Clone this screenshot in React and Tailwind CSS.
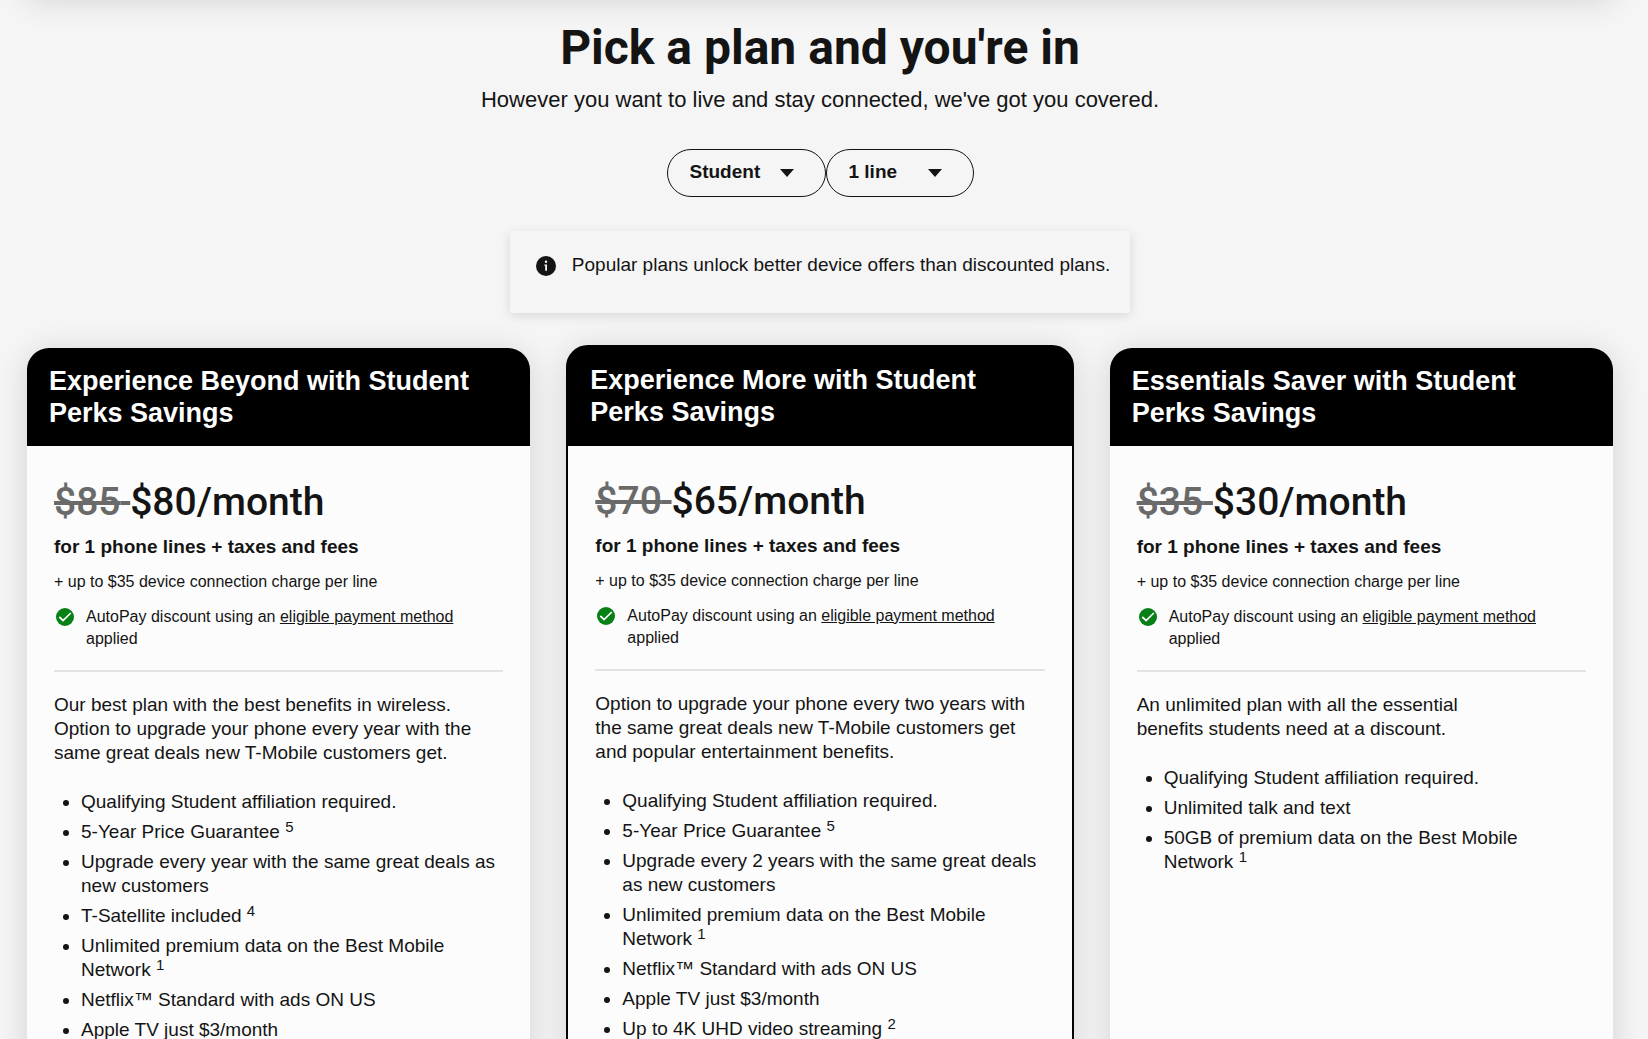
import { useState } from "react";
import clsx from "clsx";

const PLANS = [
  {
    name: "Experience Beyond with Student Perks Savings",
    oldPrice: "$85",
    price: "$80",
    description: [
      "Our best plan with the best benefits in wireless.",
      "Option to upgrade your phone every year with the",
      "same great deals new T-Mobile customers get.",
    ],
    features: [
      { text: "Qualifying Student affiliation required." },
      { text: "5-Year Price Guarantee", note: 5 },
      { text: "Upgrade every year with the same great deals as new customers" },
      { text: "T-Satellite included", note: 4 },
      { text: "Unlimited premium data on the Best Mobile Network", note: 1 },
      { text: "Netflix™ Standard with ads ON US" },
      { text: "Apple TV just $3/month" },
    ],
  },
  {
    name: "Experience More with Student Perks Savings",
    oldPrice: "$70",
    price: "$65",
    highlighted: true,
    description: [
      "Option to upgrade your phone every two years with",
      "the same great deals new T-Mobile customers get",
      "and popular entertainment benefits.",
    ],
    features: [
      { text: "Qualifying Student affiliation required." },
      { text: "5-Year Price Guarantee", note: 5 },
      { text: "Upgrade every 2 years with the same great deals as new customers" },
      { text: "Unlimited premium data on the Best Mobile Network", note: 1 },
      { text: "Netflix™ Standard with ads ON US" },
      { text: "Apple TV just $3/month" },
      { text: "Up to 4K UHD video streaming", note: 2 },
    ],
  },
  {
    name: "Essentials Saver with Student Perks Savings",
    oldPrice: "$35",
    price: "$30",
    description: [
      "An unlimited plan with all the essential",
      "benefits students need at a discount.",
    ],
    features: [
      { text: "Qualifying Student affiliation required." },
      { text: "Unlimited talk and text" },
      { text: "50GB of premium data on the Best Mobile Network", note: 1 },
    ],
  },
];

function PillSelect({ label, value, onChange, options, className }) {
  return (
    <label className="relative flex items-center">
      <select
        aria-label={label}
        value={value}
        onChange={(e) => onChange(e.target.value)}
        className={clsx(
          "h-12 appearance-none rounded-full border border-[#141414] bg-transparent pb-[2px] pl-[22px] text-[19px] font-bold",
          className
        )}
      >
        {options.map((option) => (
          <option key={option}>{option}</option>
        ))}
      </select>
      <svg
        className="pointer-events-none absolute right-8 h-2 w-[14px]"
        viewBox="0 0 14 8"
        fill="currentColor"
      >
        <path d="M0 0h14L7 8z" />
      </svg>
    </label>
  );
}

function InfoIcon() {
  return (
    <svg className="mt-[3px] size-5 shrink-0" viewBox="0 0 20 20">
      <circle cx="10" cy="10" r="10" fill="#141414" />
      <circle cx="10" cy="5.8" r="1.2" fill="#f5f5f5" />
      <path d="M8.4 8.4h2.6v6.4H9.2V9.7h-.8z" fill="#f5f5f5" />
    </svg>
  );
}

function CheckIcon() {
  return (
    <svg className="mx-[2px] mt-[2px] size-[18px] shrink-0" viewBox="0 0 18 18">
      <circle cx="9" cy="9" r="9" fill="#078015" />
      <path d="M3.3 9l3.8 3.5L14.8 5" fill="none" stroke="#fff" strokeWidth="1.7" />
    </svg>
  );
}

function PlanCard({ plan }) {
  return (
    <article
      className={clsx(
        "flex flex-col overflow-hidden rounded-t-[22px] bg-black shadow-[0_4px_32px_rgba(0,0,0,0.14)]",
        plan.highlighted && "-mx-[2px] -mt-[3px] border-2 border-black"
      )}
    >
      <h2
        className={clsx(
          "px-[22px] pt-[17px] text-[27px] leading-8 font-bold text-white",
          plan.highlighted ? "pb-[18px]" : "pb-[17px]"
        )}
      >
        {plan.name}
      </h2>
      <div
        className={clsx(
          "grow bg-[#fcfcfc] px-[27px] pb-10",
          plan.highlighted ? "pt-[31px]" : "pt-8"
        )}
      >
        <p className="font-[Roboto,sans-serif] text-[39px] leading-12 font-medium">
          <s className="text-[#6a6a6a] decoration-4">{plan.oldPrice}&nbsp;</s>
          {plan.price}/month
        </p>
        <p className="mt-[5px] text-[19px] leading-8 font-bold">
          for 1 phone lines + taxes and fees
        </p>
        <p className="mt-[7px] text-base leading-6">
          + up to $35 device connection charge per line
        </p>
        <div className="mt-3 flex gap-[10px] text-base leading-[22px]">
          <CheckIcon />
          <p>
            AutoPay discount using an{" "}
            <a href="#payment" className="underline">
              eligible payment method
            </a>{" "}
            applied
          </p>
        </div>
        <hr className="mt-5 border-t-2 border-[#e3e3e3]" />
        <p className="mt-[21px] text-[19px] leading-6">
          {plan.description.map((line) => (
            <span key={line} className="block">
              {line}
            </span>
          ))}
        </p>
        <ul className="mt-[25px] flex list-disc flex-col gap-[6px] pl-[27px] text-[19px] leading-6">
          {plan.features.map((feature) => (
            <li key={feature.text}>
              {feature.text}{" "}
              {feature.note && <sup className="-top-[6px] text-[15px]">{feature.note}</sup>}
            </li>
          ))}
        </ul>
      </div>
    </article>
  );
}

export default function App() {
  const [group, setGroup] = useState("Student");
  const [lines, setLines] = useState("1 line");

  return (
    <main className="flex h-screen flex-col overflow-hidden bg-[#f5f5f5] pr-2 font-['Liberation_Sans',Arial,sans-serif] text-[#141414]">
      {/* bottom edge of the panel above, only its shadow shows */}
      <div className="mx-[27px] -mt-10 h-10 shrink-0 shadow-[0_0_32px_rgba(0,0,0,0.14)]" />

      <header className="flex flex-col items-center pt-5 text-center">
        <h1 className="font-[Roboto,sans-serif] text-5xl leading-14 font-bold">
          Pick a plan and you're in
        </h1>
        <p className="mt-2 text-[22px] leading-8">
          However you want to live and stay connected, we've got you covered.
        </p>
      </header>

      <div className="mt-[33px] flex justify-center">
        <PillSelect
          label="Plan type"
          value={group}
          onChange={setGroup}
          options={["Student", "Popular", "Military", "Age 55+"]}
          className="w-[159px]"
        />
        <PillSelect
          label="Number of lines"
          value={lines}
          onChange={setLines}
          options={["1 line", "2 lines", "3 lines", "4 lines"]}
          className="w-[148px]"
        />
      </div>

      <div className="mx-auto mt-[34px] flex gap-4 rounded-xs pt-[22px] pr-5 pb-9 pl-[26px] shadow-[0_3px_12px_rgba(0,0,0,0.12)]">
        <InfoIcon />
        <p className="text-[19px] leading-6">
          Popular plans unlock better device offers than discounted plans.
        </p>
      </div>

      <section className="mt-[35px] grid shrink-0 grid-cols-3 gap-[38px] px-[27px]">
        {PLANS.map((plan) => (
          <PlanCard key={plan.name} plan={plan} />
        ))}
      </section>
    </main>
  );
}
